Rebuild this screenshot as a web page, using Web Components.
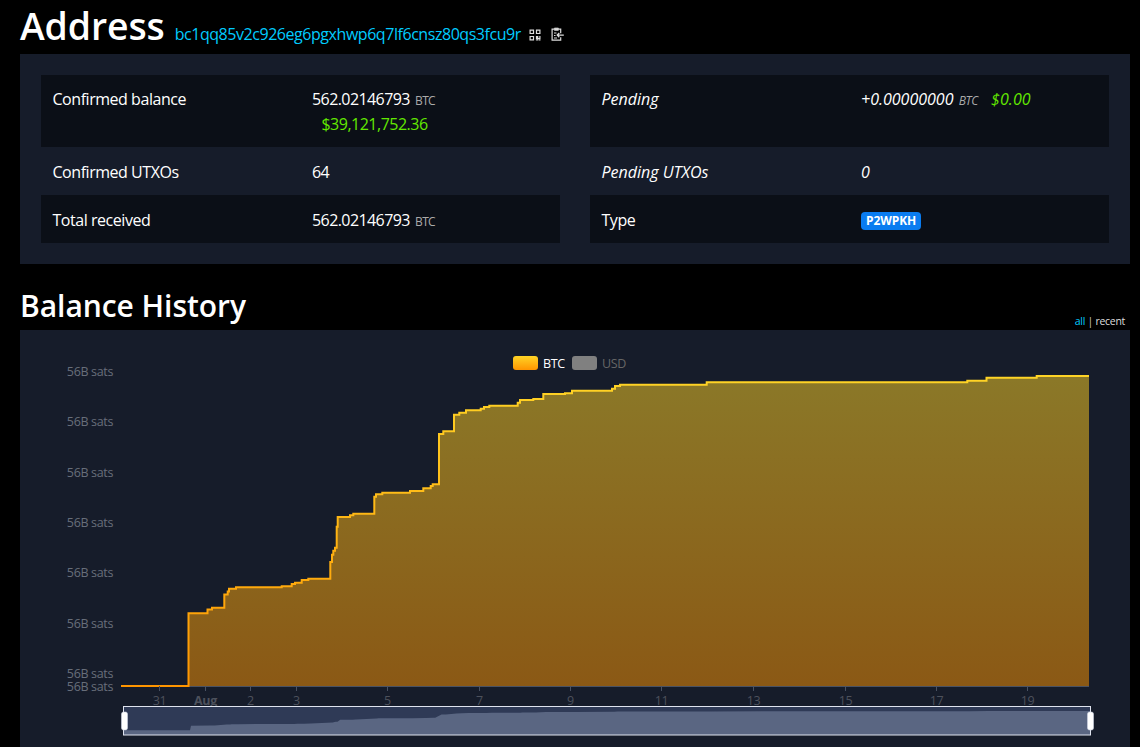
<!DOCTYPE html>
<html><head><meta charset="utf-8"><style>
html,body{margin:0;padding:0;background:#000;height:747px;overflow:hidden}
body{font-family:"Open Sans","Noto Sans",sans-serif;color:#fff}
</style></head><body>
<address-page></address-page>
<template id="t-page"><style>
:host{display:block;padding:0 10px 0 20px;width:1110px}
.head{display:flex;align-items:baseline;height:54px}
h1{margin:0;font-size:37.4px;font-weight:600;line-height:52px;color:#fff;letter-spacing:-.1px}
.addr{margin-left:10px;font-size:16px;color:#00ccff;letter-spacing:-.45px}
.icons{display:inline-flex;gap:10px;margin-left:8px;align-items:center}
.icons svg{display:block}
.card{background:#161c2a;padding:21px;display:grid;grid-template-columns:519px 519px;column-gap:30px;height:210px;box-sizing:border-box}
.col{display:block}
.sub{display:flex;align-items:flex-end;justify-content:space-between;height:66px}
h2{margin:0;font-size:30px;font-weight:600;line-height:40px;padding-bottom:4px;letter-spacing:-.05px}
.links{font-size:10.5px;line-height:13px;letter-spacing:-.3px;padding-right:5px;padding-bottom:2px;color:#ccc;display:flex}
.links a{color:#00ccff}.links b{font-weight:400;color:#ddd}.links i{font-style:normal;margin:0 2.5px}
.badge{display:inline-block;background:#0a7cf0;color:#fff;font:700 12px/18px "Open Sans",sans-serif;padding:0 5px;border-radius:4px;letter-spacing:-.1px;vertical-align:1px}
.n{letter-spacing:var(--n,-.58px)}
.u{color:#aaa;font-size:12px;line-height:1;letter-spacing:var(--u,-.65px);margin-left:1px}
.g{color:#62e800;letter-spacing:var(--g,-.5px)}
.stack{display:inline-block;text-align:center}
.stack span.l{display:block}
.stack span.l.g{padding:1px 0 0 2px}
</style>
<div class="head"><h1>Address</h1><span class="addr">bc1qq85v2c926eg6pgxhwp6q7lf6cnsz80qs3fcu9r</span>
<span class="icons">
<svg width="12" height="12" viewBox="0 0 12 12" fill="#ddd" style="transform:translateY(1px)"><path fill-rule="evenodd" d="M.5.5h4.600v4.600H.5zM1.700 1.700v2.200h2.200V1.700zM6.900.5h4.600v4.600H6.900zM8.100 1.700v2.200h2.200V1.700zM.5 6.900h4.600v4.600H.5zM1.700 8.100v2.200h2.200V8.100z"/><path d="M6.900 6.900h2.400v2h1V6.900h1.200v3h-2.200v1.600H8.100V9.900H6.900zM6.900 10.300h1v1.200h-1zM9.800 10.300h1.700v1.200H9.800z"/></svg>
<svg width="13" height="14" viewBox="0 0 13 14" fill="none" stroke="#ddd" stroke-width="1.200"><path d="M3.200 2.200H1.100v11h8.600v-3M7.600 2.200h2.100v4"/><path d="M3.400 1.100h4v2.200h-4z" fill="#ddd" stroke-width=".8"/><path d="M12.800 8.100H6.200M8.300 6 6.200 8.100l2.100 2.100" stroke-width="1.300"/><path d="M3 6h2.500M3 8.500h1.500M3 11h3" stroke-width="1"/></svg>
</span></div>
<div class="card">
<div class="col">
<info-row tall shade><span slot="k">Confirmed balance</span><span class="stack"><span class="l"><span class="n">562.02146793</span> <span class="u">BTC</span></span><span class="l g">$39,121,752.36</span></span></info-row>
<info-row><span slot="k">Confirmed UTXOs</span><span class="n">64</span></info-row>
<info-row shade><span slot="k">Total received</span><span class="n">562.02146793</span> <span class="u">BTC</span></info-row>
</div>
<div class="col">
<info-row tall shade em><span slot="k">Pending</span><span class="n">+0.00000000</span> <span class="u">BTC</span><span class="g" style="margin-left:13px">$0.00</span></info-row>
<info-row em><span slot="k">Pending UTXOs</span><span class="n">0</span></info-row>
<info-row shade><span slot="k">Type</span><span class="badge">P2WPKH</span></info-row>
</div>
</div>
<div class="sub"><h2>Balance History</h2><div class="links"><a>all</a><i>|</i><b>recent</b></div></div>
<balance-chart></balance-chart>
</template>
<template id="t-row"><style>
:host{display:grid;grid-template-columns:271px 1fr;height:48px;box-sizing:border-box;padding:12.600px 0 0 12px;font-size:16px;line-height:24px;color:#fff}
:host([shade]){background:#0b0f17}
:host([tall]){height:72px;padding-top:12px}
:host([em]){font-style:italic;--n:0px;--g:.1px;--u:-.3px;--k:0px}
.k{letter-spacing:var(--k,-.46px);margin-left:-.5px}
.v{margin-left:-12px}
</style><div class="k"><slot name="k"></slot></div><div class="v"><slot></slot></div></template>
<template id="t-chart"><style>
:host{display:block;background:#161c2a;height:440px;position:relative}
svg{display:block;position:absolute;left:0;top:0;font-family:"Open Sans",sans-serif}
text{font-size:12.500px;letter-spacing:-.35px}
</style><svg id="s" width="1110" height="440"></svg></template>
<script>
const tpl=id=>document.getElementById(id).content.cloneNode(true);
class InfoRow extends HTMLElement{constructor(){super();this.attachShadow({mode:'open'}).appendChild(tpl('t-row'))}}
customElements.define('info-row',InfoRow);
const PTS=[[121,686],[188.500,613.300],[207.500,609.500],[212,607.700],[224.300,594.500],[227.700,591.500],[229,588.700],[236,587.200],[281.700,586.200],[291.700,584],[295,582.700],[301.700,580],[308.300,578.700],[330.300,562],[332,554.700],[333.300,550.700],[335,547.700],[336.700,526.700],[337.700,517],[350,515.300],[353.300,513.700],[374.300,496.700],[376,494.300],[382.300,492.700],[410,491],[423.300,488.300],[430.700,486],[432.700,484.300],[439,434],[443.300,431.300],[454,414.700],[459.300,412.700],[466,410.300],[480.700,408.700],[484,407],[489.300,405.700],[517.700,402.700],[520,400],[533.300,399],[543.300,394],[565,393.300],[572,390.700],[612,388.700],[615,386],[620,384.700],[706.700,382.300],[967.300,380.700],[986.500,377.700],[1036.700,376],[1089,376]];
class BalanceChart extends HTMLElement{constructor(){super();const r=this.attachShadow({mode:'open'});r.appendChild(tpl('t-chart'));
const OY=330,OX=20,Y=v=>v-OY,X=v=>v-OX;
let lineD='';let first=true;for(const p of PTS){lineD+=first?`M${X(p[0])} ${Y(p[1])}`:`H${X(p[0])}V${Y(p[1])}`;first=false}
const mini=v=>Y(730.300-(686-v)*0.0623);
let miniD='';first=true;for(const p of PTS){const x=X(Math.max(124,p[0]+2.500));miniD+=first?`M${x} ${mini(p[1])}`:`L${x} ${mini(p[1])}`;first=false}
miniD=miniD.replace(/L(\d+\.?\d*) (\d+\.?\d*)/,(m,x,y)=>`L${x-1} ${mini(686)}L${x} ${y}`);
let h='<defs><linearGradient id="gl" gradientUnits="userSpaceOnUse" x1="0" y1="46" x2="0" y2="356"><stop offset="0" stop-color="#ffd426"/><stop offset="1" stop-color="#ff9500"/></linearGradient><linearGradient id="gs" x1="0" y1="0" x2="0" y2="1"><stop offset="0" stop-color="#ffd426"/><stop offset="1" stop-color="#ff9500"/></linearGradient></defs>';
[[371.500,'56B sats'],[421.500,'56B sats'],[472.500,'56B sats'],[522.500,'56B sats'],[572.500,'56B sats'],[623.500,'56B sats'],[673.500,'56B sats'],[686.500,'56B sats']].forEach(([y,t])=>{h+=`<text x="93" y="${Y(y)+4}" text-anchor="end" fill="#686e7a">${t}</text>`});
h+=`<rect x="493" y="26" width="25" height="14" rx="3" fill="url(#gs)"/><text x="523" y="37.500" fill="#fff">BTC</text><rect x="552" y="26" width="25" height="14" rx="3" fill="#808080"/><text x="582" y="37.500" fill="#666">USD</text>`;
h+=`<path d="${lineD}V356H101Z" fill="url(#gl)" fill-opacity=".5"/>`;
h+=`<path d="M101 356.500H1069" stroke="#4a5263" fill="none"/>`;
h+=`<path d="${lineD}" fill="none" stroke="url(#gl)" stroke-width="2"/>`;
[[159.500,'31'],[205.500,'Aug',1],[250.500,'2'],[296.500,'3'],[387.500,'5'],[479.500,'7'],[570.500,'9'],[661.500,'11'],[753.500,'13'],[845.500,'15'],[936.500,'17'],[1027.500,'19']].forEach(([x,t,b])=>{h+=`<path d="M${x-20} 356v5" stroke="#4a5263"/><text x="${x-20}" y="375" text-anchor="middle" fill="#4d515c"${b?' font-weight="700"':''}>${t}</text>`});
h+=`<rect x="103.500" y="376.500" width="967" height="28.500" fill="#2f3a56"/>`;
h+=`<path d="${miniD}L1071 ${mini(376)}V405H104Z" fill="#5a6682"/>`;
h+=`<rect x="103.500" y="376.500" width="967" height="28.500" fill="none" stroke="#dfe3ee"/>`;
h+=`<rect x="101.500" y="382" width="6" height="18" rx="2" fill="#fff" stroke="#cfd4e2" stroke-width=".6"/><rect x="1067.500" y="382" width="6" height="18" rx="2" fill="#fff" stroke="#cfd4e2" stroke-width=".6"/>`;
r.getElementById('s').innerHTML=h;
}}
customElements.define('balance-chart',BalanceChart);
class AddressPage extends HTMLElement{constructor(){super();this.attachShadow({mode:'open'}).appendChild(tpl('t-page'))}}
customElements.define('address-page',AddressPage);
</script>
</body></html>
